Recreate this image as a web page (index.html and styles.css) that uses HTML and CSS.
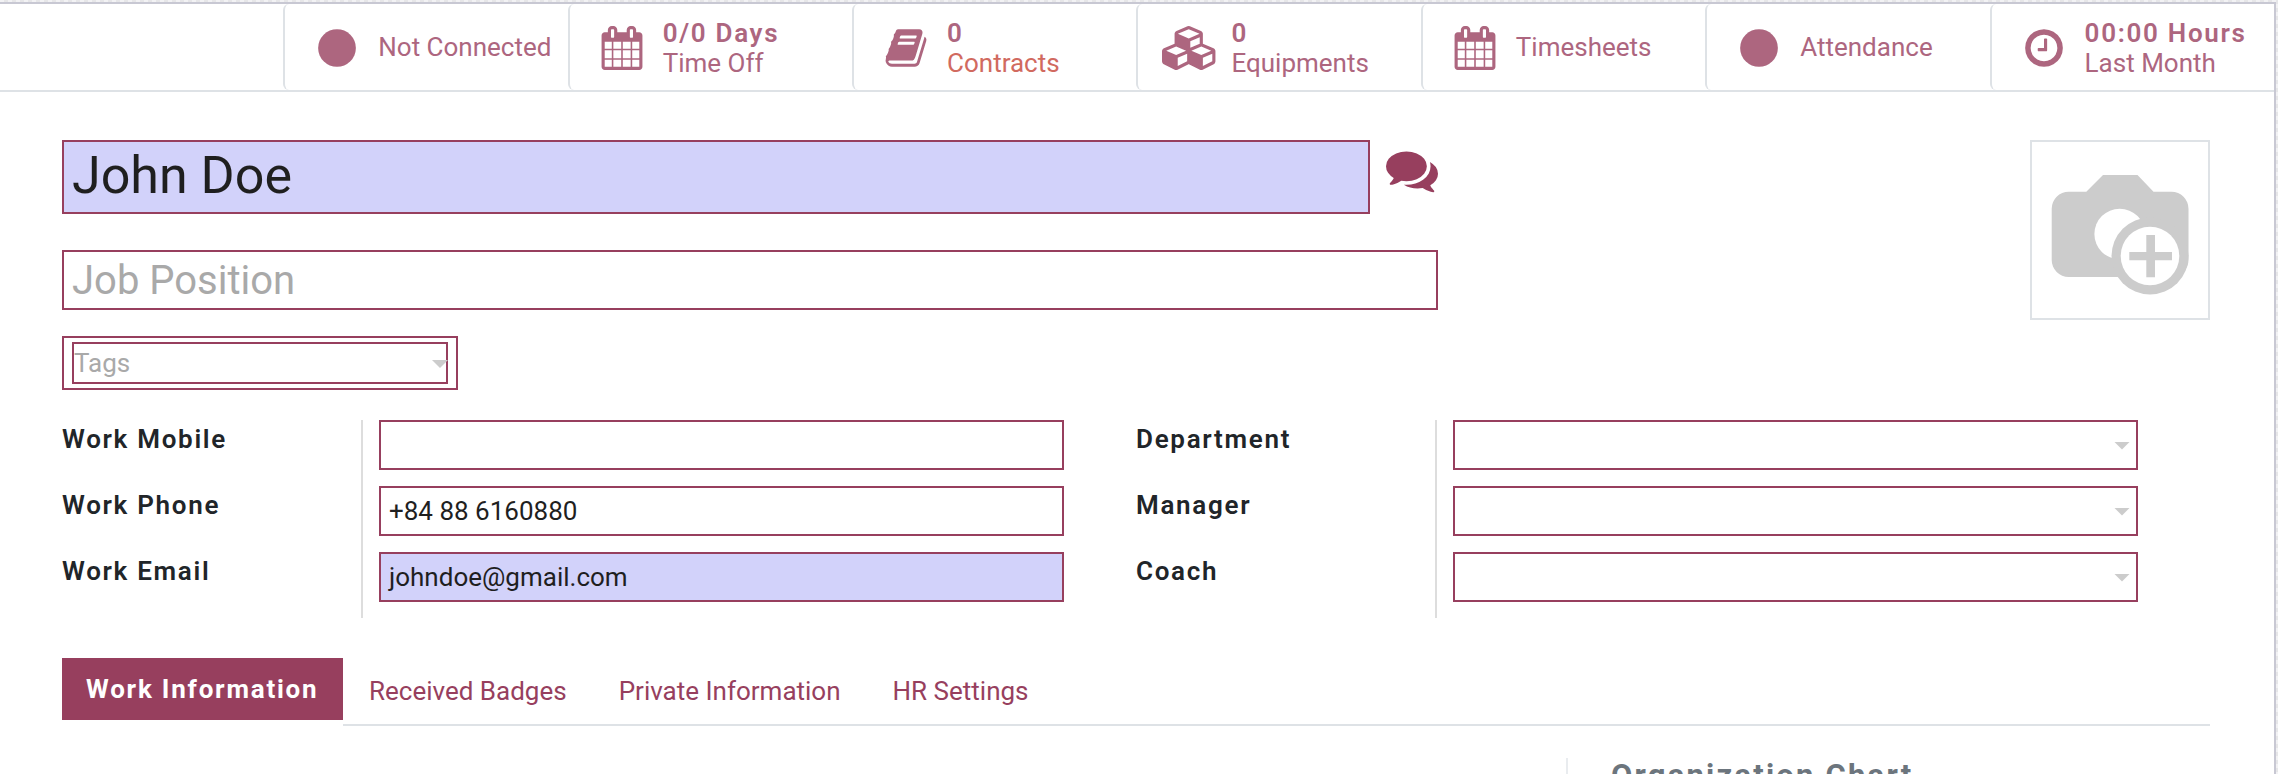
FILE: index.html
```html
<!DOCTYPE html>
<html lang="en">
<head>
<meta charset="utf-8">
<title>Employee - John Doe</title>
<link rel="stylesheet" href="styles.css">
</head>
<body>
<svg class="defs" width="0" height="0" aria-hidden="true">
  <symbol id="calendar" viewBox="0 0 1792 1792"><path d="M192 1664h288v-288h-288v288zm352 0h320v-288h-320v288zm-352-352h288v-320h-288v320zm352 0h320v-320h-320v320zm-352-384h288v-288h-288v288zm736 736h320v-288h-320v288zm-384-736h320v-288h-320v288zm768 736h288v-288h-288v288zm-384-352h320v-320h-320v320zm-352-864v-288q0-13-9.5-22.5t-22.5-9.5h-64q-13 0-22.5 9.5t-9.5 22.5v288q0 13 9.5 22.5t22.5 9.5h64q13 0 22.5-9.5t9.5-22.5zm736 864h288v-320h-288v320zm-384-384h320v-288h-320v288zm384 0h288v-288h-288v288zm32-480v-288q0-13-9.5-22.5t-22.5-9.5h-64q-13 0-22.5 9.5t-9.5 22.5v288q0 13 9.5 22.5t22.5 9.5h64q13 0 22.5-9.5t9.5-22.5zm384-64v1280q0 52-38 90t-90 38h-1408q-52 0-90-38t-38-90v-1280q0-52 38-90t90-38h128v-96q0-66 47-113t113-47h64q66 0 113 47t47 113v96h384v-96q0-66 47-113t113-47h64q66 0 113 47t47 113v96h128q52 0 90 38t38 90z"/></symbol>
  <symbol id="circle" viewBox="0 0 1792 1792"><circle cx="896" cy="896" r="768"/></symbol>
</svg>
<main class="sheet">
  <nav class="stats">
    <a class="stat"><span class="stat-icon"><svg class="fa"><use href="#circle"/></svg></span><span class="stat-text">Not Connected</span></a>
    <a class="stat"><span class="stat-icon"><svg class="fa"><use href="#calendar"/></svg></span><span class="stat-text"><b>0/0 Days</b>Time Off</span></a>
    <a class="stat"><span class="stat-icon"><svg class="fa" viewBox="0 0 1792 1792"><path d="M1703 478q40 57 18 129l-275 906q-19 64-76.5 107.5t-122.5 43.5h-923q-77 0-148.5-53.5t-99.5-131.5q-24-67-2-127 0-4 3-27t4-37q1-8-3-21.5t-3-19.5q2-11 8-21t16.5-23.5 16.5-23.5q23-38 45-91.5t30-91.5q3-10 .5-30t-.5-28q3-11 17-28t17-23q21-36 42-92t25-90q1-9-2.5-32t.5-28q4-13 22-30.5t22-22.5q19-26 42.5-84.5t27.5-96.5q1-8-3-25.5t-2-26.5q2-8 9-18t18-23 17-21q8-12 16.5-30.5t15-35 16-36 19.5-32 26.5-23.5 36-11.5 47.5 5.5l-1 3q38-9 51-9h761q74 0 114 56t18 130l-274 906q-36 119-71.5 153.5t-128.5 34.5h-869q-27 0-38 15-11 16-1 43 24 70 144 70h923q29 0 56-15.5t35-41.5l300-987q7-22 5-57 38 15 59 43zm-1064 2q-4 13 2 22.5t20 9.5h608q13 0 25.5-9.5t16.5-22.5l21-64q4-13-2-22.5t-20-9.5h-608q-13 0-25.5 9.5t-16.5 22.5zm-83 256q-4 13 2 22.5t20 9.5h608q13 0 25.5-9.5t16.5-22.5l21-64q4-13-2-22.5t-20-9.5h-608q-13 0-25.5 9.5t-16.5 22.5z"/></svg></span><span class="stat-text"><b>0</b><span class="danger">Contracts</span></span></a>
    <a class="stat"><span class="stat-icon"><svg class="fa fa-wide" viewBox="0 0 2304 1792"><path d="M640 1632l384-192v-314l-384 164v342zm-64-454l404-173-404-173-404 173zm1088 454l384-192v-314l-384 164v342zm-64-454l404-173-404-173-404 173zm-448-293l384-165v-266l-384 164v267zm-64-379l441-189-441-189-441 189zm1088 518v416q0 36-19 67t-52 47l-448 224q-25 14-57 14t-57-14l-448-224q-4-2-7-4-2 2-7 4l-448 224q-25 14-57 14t-57-14l-448-224q-33-16-52-47t-19-67v-416q0-38 21.5-70t56.5-48l434-186v-400q0-38 21.5-70t56.5-48l448-192q23-10 50-10t50 10l448 192q35 16 56.5 48t21.5 70v400l434 186q36 16 57 48t21 70z"/></svg></span><span class="stat-text"><b>0</b>Equipments</span></a>
    <a class="stat"><span class="stat-icon"><svg class="fa"><use href="#calendar"/></svg></span><span class="stat-text">Timesheets</span></a>
    <a class="stat"><span class="stat-icon"><svg class="fa"><use href="#circle"/></svg></span><span class="stat-text">Attendance</span></a>
    <a class="stat"><span class="stat-icon"><svg class="fa" viewBox="0 0 1792 1792"><path d="M1024 544v448q0 14-9 23t-23 9h-320q-14 0-23-9t-9-23v-64q0-14 9-23t23-9h224v-352q0-14 9-23t23-9h64q14 0 23 9t9 23zm416 352q0-148-73-273t-198-198-273-73-273 73-198 198-73 273 73 273 198 198 273 73 273-73 198-198 73-273zm224 0q0 209-103 385.5t-279.5 279.5-385.5 103-385.5-103-279.5-279.5-103-385.5 103-385.5 279.5-279.5 385.5-103 385.5 103 279.5 279.5 103 385.5z"/></svg></span><span class="stat-text"><b>00:00 Hours</b>Last Month</span></a>
  </nav>

  <div class="content">
    <header class="head">
      <div class="title">
        <div class="name-row">
          <div class="box name filled">John Doe</div>
          <svg class="chat" viewBox="0 0 1792 1792"><path d="M1408 768q0 139-94 257t-256.5 186.5-353.5 68.5q-86 0-176-16-124 88-278 128-36 9-86 16h-3q-11 0-20.5-8t-11.5-21q-1-3-1-6.5t.5-6.5 2-6l2.5-5 3.5-5.5 4-5 4.5-5 4-4.5q5-6 23-25t26-29.5 22.5-29 25-38.5 20.5-44q-124-72-195-177t-71-224q0-139 94-257t256.5-186.5 353.5-68.5 353.5 68.5 256.5 186.5 94 257zm384 256q0 120-71 224.5t-195 176.5q10 24 20.5 44t25 38.5 22.5 29 26 29.5 23 25q1 1 4 4.5t4.5 5 4 5 3.5 5.5l2.5 5 2 6 .5 6.5-1 6.5q-3 14-13 22t-22 7q-50-7-86-16-154-40-278-128-90 16-176 16-271 0-472-132 58 4 88 4 161 0 309-45t264-129q125-92 192-212t67-254q0-77-23-152 129 71 204 178t75 230z"/></svg>
        </div>
        <div class="box job">Job Position</div>
        <div class="box tags"><div class="box tags-input"><span>Tags</span><i class="caret"></i></div></div>
      </div>
      <div class="photo">
        <svg width="176" height="176" viewBox="0 0 176 176">
          <path fill="#ccc" d="M36.700 49.700H54.300L71 33h34.500L121.500 49.700H139.500a17 17 0 0 1 17 17V118a17 17 0 0 1-17 17H36.700a17 17 0 0 1-17-17V66.700a17 17 0 0 1 17-17z"/>
          <circle cx="87.700" cy="92" r="25.300" fill="#fff"/>
          <circle cx="118" cy="114" r="38.500" fill="#ccc"/>
          <circle cx="118" cy="114" r="29.300" fill="#fff"/>
          <path fill="#ccc" d="M114.300 93h8.700v17h17v8.300h-17v17h-8.700v-17h-17V110h17z"/>
        </svg>
      </div>
    </header>

    <section class="groups">
      <div class="group">
        <div class="labels"><label>Work Mobile</label><label>Work Phone</label><label>Work Email</label></div>
        <div class="fields"><div class="box field"></div><div class="box field">+84 88 6160880</div><div class="box field filled">johndoe@gmail.com</div></div>
      </div>
      <div class="group">
        <div class="labels"><label>Department</label><label>Manager</label><label>Coach</label></div>
        <div class="fields"><div class="box field select"><i class="caret"></i></div><div class="box field select"><i class="caret"></i></div><div class="box field select"><i class="caret"></i></div></div>
      </div>
    </section>

    <nav class="tabs">
      <a class="tab active">Work Information</a>
      <div class="tab-rest"><a class="tab">Received Badges</a><a class="tab">Private Information</a><a class="tab">HR Settings</a></div>
    </nav>
    <section class="org"><h2>Organization Chart</h2></section>
  </div>
</main>
</body>
</html>
```
FILE: styles.css
```css
* { box-sizing: border-box; }

body {
  margin: 0;
  height: 774px;
  overflow: hidden;
  padding: 2px 2px 0 0;
  background: repeating-conic-gradient(#e6e6e8 0 25%, #f2f2f4 0 50%) 0 0 / 8px 8px;
  font: 400 26px/30px Roboto, sans-serif;
  color: #212529;
}

.defs { position: absolute; }

.sheet {
  height: 772px;
  overflow: hidden;
  border: solid #c8c8d3;
  border-width: 2px 2px 0 0;
  background: #fff;
}

.stats {
  display: flex;
  justify-content: flex-end;
  height: 88px;
  border-bottom: 2px solid #dee2e6;
}

.stat {
  display: flex;
  align-items: center;
  width: 284.400px;
  border-left: 2px solid #dee2e6;
  border-radius: 6px;
  color: #ad667f;
  white-space: nowrap;
}

.stat-icon {
  display: flex;
  justify-content: center;
  width: 78px;
  margin: 2px 2px 0 13px;
}

.fa { width: 44px; height: 44px; fill: currentColor; }
.fa-wide { width: 56.600px; }

.stat-text { display: flex; flex-direction: column; }
.stat-text b { margin-top: 2px; font-weight: 600; letter-spacing: 1.700px; }
.danger { color: #d16a5f; }

.content { padding: 48px 64px 0 62px; }

.head { display: flex; justify-content: space-between; height: 280px; }
.title { width: 1376px; }
.name-row { display: flex; gap: 16px; }

.box { border: 2px solid #973f5e; background: #fff; }
.filled { background: #d2d2fa; }

.name {
  width: 1308px;
  height: 74px;
  padding: 0 8px;
  font-size: 52px;
  line-height: 68px;
}

.chat { width: 52px; height: 52px; margin-top: 4px; fill: #973f5e; }

.job {
  height: 60px;
  margin-top: 36px;
  padding: 0 8px;
  font-size: 40px;
  line-height: 58px;
  color: #a9a9a9;
}

.tags { width: 396px; height: 54px; margin-top: 26px; padding: 4px 8px; }

.tags-input {
  display: flex;
  justify-content: space-between;
  width: 376px;
  height: 42px;
  line-height: 38px;
  color: #a9a9a9;
}

.tags-input .caret { margin: 16px -2px 0 0; }

.caret {
  width: 16px;
  height: 8px;
  background: #ccc;
  clip-path: polygon(0 0, 100% 0, 50% 100%);
}

.photo { width: 180px; height: 180px; border: 2px solid #dee2e6; }

.groups { display: grid; grid-template-columns: 1002px 1002px; column-gap: 72px; }
.group { display: grid; grid-template-columns: 299px 703px; height: 198px; }

.labels label {
  display: block;
  height: 66px;
  padding-top: 4px;
  font-weight: 600;
  letter-spacing: 1.700px;
}

.fields {
  display: flex;
  flex-direction: column;
  gap: 16px;
  padding-left: 16px;
  border-left: 2px solid #ddd;
}

.field { height: 50px; padding: 0 8px; line-height: 46px; color: #1f1f1f; }
.name { color: #1f1f1f; }
.select { display: flex; justify-content: flex-end; align-items: center; padding: 1px 6px 0 0; }

.tabs { display: flex; height: 68px; margin-top: 40px; }
.tab { padding: 18px 26px 0; color: #973f5e; white-space: nowrap; }

.active {
  width: 281px;
  height: 62px;
  padding: 16px 0 0 24px;
  background: #973f5e;
  color: #fff;
  font-weight: 700;
  letter-spacing: 1.780px;
}

.tab-rest { display: flex; flex: 1; border-bottom: 2px solid #dee2e6; }

.org {
  width: 644px;
  height: 60px;
  margin: 32px 0 0 auto;
  padding-left: 43px;
  border-left: 2px solid #e9ecef;
}

.org h2 {
  margin: 0;
  font-size: 31px;
  font-weight: 700;
  line-height: 36px;
  letter-spacing: 2.200px;
  color: #6c757d;
}
```
